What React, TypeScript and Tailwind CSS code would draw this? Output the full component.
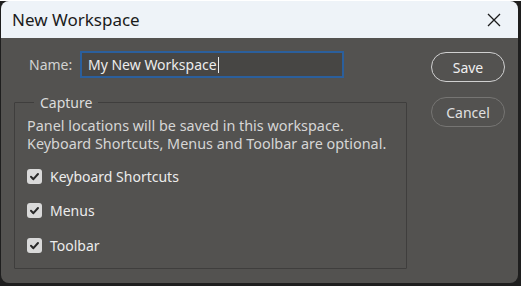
import React from "react";

function Check() {
  return (
    <span className="flex h-[15px] w-[15px] items-center justify-center rounded-[3px] bg-[#d9d9d9]">
      <svg width="11" height="11" viewBox="0 0 11 11">
        <path d="M2 5.8 L4.4 8.2 L9 3" stroke="#2a2a2a" strokeWidth="2" fill="none" strokeLinecap="round" strokeLinejoin="round" />
      </svg>
    </span>
  );
}

export default function App() {
  const font = { fontFamily: '"Noto Sans", "Open Sans", sans-serif' };
  return (
    <div className="h-[286px] w-[521px] bg-[#1e1e1e]" style={font}>
      <div className="ml-px mt-px flex h-[282px] w-[517px] flex-col overflow-hidden rounded-[8px] bg-[#535250]">
        <div className="flex h-[37px] items-center justify-between bg-[#eef3f8] pl-[11px] pr-[17px]">
          <span className="text-[17px] text-[#1b1b1b]">New Workspace</span>
          <svg width="14" height="14" viewBox="0 0 14 14">
            <path d="M1 1 L13 13 M13 1 L1 13" stroke="#1b1b1b" strokeWidth="1.3" />
          </svg>
        </div>
        <div className="flex flex-1 pl-[13px] pr-[13px]">
          <div className="flex w-[393px] flex-col">
            <div className="mt-[13px] flex items-center">
              <span className="w-[66px] pl-[15px] text-[14px] text-[#d2d2d2]">Name:</span>
              <div className="flex h-[27px] w-[264px] items-center border-2 border-[#2b5f9c] bg-[#474644] px-[6px]">
                <span className="text-[14px] text-[#ececec]">My New Workspace</span>
                <span className="ml-[1px] h-[16px] w-px bg-[#ececec]" />
              </div>
            </div>
            <fieldset className="mt-[14px] h-[177px] rounded-[1px] border border-[#3f3e3d] px-[12px] pt-0">
              <legend className="ml-[7px] px-[6px] text-[14px] text-[#dcdcdc]">Capture</legend>
              <p className="mt-[4px] text-[14.4px] leading-[18px] text-[#d6d6d6]">
                Panel locations will be saved in this workspace.
                <br />
                Keyboard Shortcuts, Menus and Toolbar are optional.
              </p>
              <div className="mt-[13px] flex flex-col gap-[14.5px]">
                {["Keyboard Shortcuts", "Menus", "Toolbar"].map((l) => (
                  <label key={l} className="flex h-[20px] items-center gap-[8px] text-[14px] text-[#ececec]">
                    <Check />
                    {l}
                  </label>
                ))}
              </div>
            </fieldset>
          </div>
          <div className="ml-[24px] mt-[14px] flex flex-col gap-[15px]">
            <button className="h-[30px] w-[74px] rounded-full border-[1.5px] border-[#d0d0d0] text-[14px] text-[#f0f0f0]">Save</button>
            <button className="h-[30px] w-[74px] rounded-full border-[1.5px] border-[#767573] text-[14px] text-[#e0e0e0]">Cancel</button>
          </div>
        </div>
      </div>
    </div>
  );
}
